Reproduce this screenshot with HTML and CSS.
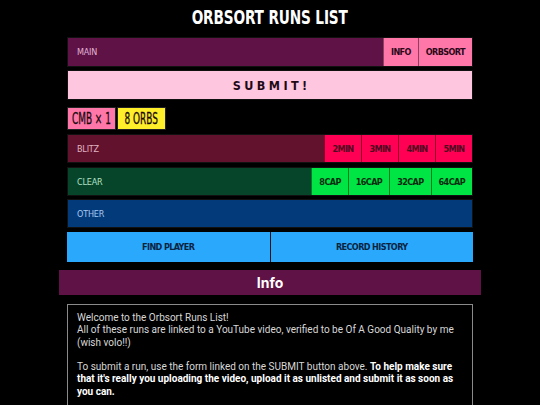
FILE: index.html
```html
<!DOCTYPE html>
<html lang="en">
<head>
<meta charset="utf-8">
<title>Orbsort Runs List</title>
<link rel="stylesheet" href="styles.css">
</head>
<body>
<div class="page">
  <h1 class="title"><span class="title-text">ORBSORT RUNS LIST</span></h1>
  <nav class="nav">
    <div class="row row-main">
      <span class="row-label">MAIN</span>
      <a class="btn btn-pink">INFO</a>
      <a class="btn btn-pink">ORBSORT</a>
    </div>
    <div class="row row-submit">
      <span class="submit-text">SUBMIT!</span>
    </div>
    <div class="badges">
      <span class="badge badge-pink"><span class="badge-text">CMB × 1</span></span>
      <span class="badge badge-yellow"><span class="badge-text">8 ORBS</span></span>
    </div>
    <div class="row row-blitz">
      <span class="row-label">BLITZ</span>
      <a class="btn btn-red">2MIN</a>
      <a class="btn btn-red">3MIN</a>
      <a class="btn btn-red">4MIN</a>
      <a class="btn btn-red">5MIN</a>
    </div>
    <div class="row row-clear">
      <span class="row-label">CLEAR</span>
      <a class="btn btn-green">8CAP</a>
      <a class="btn btn-green">16CAP</a>
      <a class="btn btn-green">32CAP</a>
      <a class="btn btn-green">64CAP</a>
    </div>
    <div class="row row-other">
      <span class="row-label">OTHER</span>
    </div>
    <div class="row row-split">
      <a class="btn btn-blue">FIND PLAYER</a>
      <a class="btn btn-blue">RECORD HISTORY</a>
    </div>
  </nav>
  <h2 class="section-title">Info</h2>
  <div class="info-box">
    <p>Welcome to the Orbsort Runs List!<br>All of these runs are linked to a YouTube video, verified to be Of A Good Quality by me (wish volo!!)</p>
    <p>To submit a run, use the form linked on the SUBMIT button above. <b>To help make sure that it's really you uploading the video, upload it as unlisted and submit it as soon as you can.</b></p>
  </div>
</div>
</body>
</html>
```

FILE: styles.css
```css
html, body {
  margin: 0;
  padding: 0;
  background: #000;
}

body {
  font-family: "Roboto", "Liberation Sans", sans-serif;
  color: #ddd;
}

.page {
  width: 422px;
  margin: 0 auto;
}

.title {
  margin: 0;
  height: 37px;
  line-height: 35px;
  text-align: center;
  font-family: "DejaVu Sans Condensed", sans-serif;
  font-weight: 700;
  font-size: 20px;
  color: #fff;
}

.title-text {
  display: inline-block;
  transform: scaleX(0.76);
  letter-spacing: -0.2px;
}

.nav {
  margin: 0 8px;
  display: flex;
  flex-direction: column;
}

.row {
  display: flex;
  align-items: stretch;
  height: 30px;
  box-sizing: border-box;
  border: 1px solid #111;
  font-family: "DejaVu Sans Condensed", sans-serif;
}

.row-label {
  flex: 1;
  display: flex;
  align-items: center;
  padding-left: 9px;
  font-size: 9px;
  letter-spacing: -0.2px;
}

.btn {
  display: flex;
  align-items: center;
  justify-content: center;
  box-sizing: border-box;
  padding: 0 7px;
  font-size: 9px;
  font-weight: 700;
  letter-spacing: -0.6px;
  white-space: nowrap;
  border-left: 1px solid rgba(0, 0, 0, 0.45);
}

.row-main {
  background: #5e1245;
}
.row-main .row-label { color: #e2b2d4; }

.btn-pink {
  background: #ff77a8;
  color: #2a0818;
}

.row-submit {
  margin-top: 3px;
  background: #ffc6df;
  justify-content: center;
  align-items: center;
}

.submit-text {
  font-size: 12.5px;
  font-weight: 700;
  letter-spacing: 3.4px;
  margin-right: -3.4px;
  color: #1e0a16;
}

.badges {
  margin-top: 7px;
  display: flex;
  gap: 1px;
  height: 23px;
  font-family: "DejaVu Sans Condensed", sans-serif;
}

.badge {
  display: flex;
  align-items: center;
  justify-content: center;
  width: 49px;
  box-sizing: border-box;
  border: 1px solid #222;
  font-size: 15px;
  white-space: nowrap;
  color: #1a0a10;
}

.badge-text {
  display: inline-block;
  transform: scaleX(0.66);
  -webkit-text-stroke: 0.3px #1a0a10;
}

.badge-pink { background: #ff77a8; }
.badge-yellow { background: #ffee2a; }

.row-blitz {
  margin-top: 4px;
  height: 29px;
  background: #63122d;
}
.row-blitz .row-label { color: #e0b4c2; }

.btn-red {
  background: #ff0055;
  color: #4e0a1e;
  width: 37px;
  padding: 0;
}

.row-clear {
  margin-top: 4px;
  height: 29px;
  background: #06452a;
}
.row-clear .row-label { color: #b4e0c4; }

.btn-green {
  background: #00e444;
  color: #0a2a12;
  padding: 0 7px;
}

.row-other {
  margin-top: 3px;
  height: 29px;
  background: #023a7a;
}
.row-other .row-label { color: #a8c6f0; }

.row-split {
  margin-top: 4px;
  background: #111;
  gap: 1px;
  border: none;
}

.btn-blue {
  flex: 1;
  border: none;
  background: #2aa8fc;
  color: #0a2440;
}

.section-title {
  margin: 8px 0 0;
  height: 25px;
  line-height: 25px;
  background: #5e1245;
  color: #fff;
  text-align: center;
  font-family: "Inter", "Roboto", sans-serif;
  font-weight: 700;
  font-size: 14px;
}

.info-box {
  margin: 9px 8px 0;
  border: 1px solid #8a8a8a;
  padding: 7px 8px 10px 9px;
  font-size: 10px;
  line-height: 12.3px;
  color: #d8d8d8;
}

.info-box p {
  margin: 0 0 12.3px;
}

.info-box b {
  color: #fff;
}
```
